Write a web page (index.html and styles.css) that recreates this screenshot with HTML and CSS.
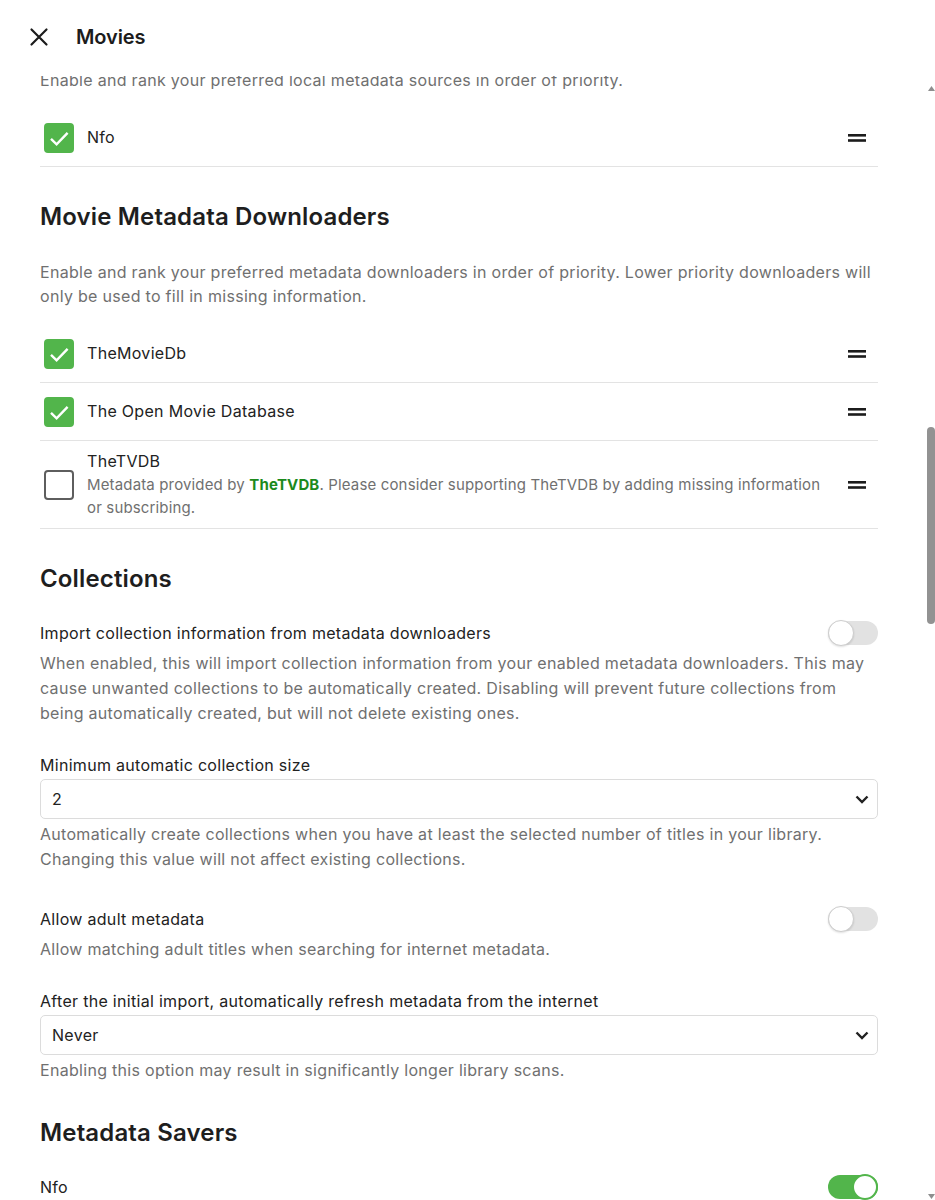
FILE: index.html
```html
<!DOCTYPE html>
<html lang="en">
<head>
<meta charset="utf-8">
<title>Movies – Library options</title>
<link rel="stylesheet" href="styles.css">
</head>
<body>
<div class="dialog">
  <header class="dialog-header">
    <button class="btn-close" type="button" aria-label="Close">
      <svg width="24" height="24" viewBox="0 0 24 24"><path d="M4.5 4.5 19.5 19.5M19.5 4.5 4.5 19.5" fill="none" stroke="#1c1c1c" stroke-width="2.2" stroke-linecap="round"/></svg>
    </button>
    <h1 class="dialog-title">Movies</h1>
  </header>

  <div class="dialog-main">
  <main class="dialog-body" id="scroller">
    <div class="content">

      <section class="group group-first">
        <div class="field">
          <label class="field-label" for="content-type">Content type</label>
          <div class="select-wrap">
            <select id="content-type" class="select" disabled><option>Movies</option></select>
            <svg class="chevron" width="14" height="9" viewBox="0 0 14 9"><path d="M1.5 1.5 7 7l5.5-5.5" fill="none" stroke="#222" stroke-width="2.4"/></svg>
          </div>
        </div>
        <div class="field">
          <label class="field-label" for="display-name">Display name</label>
          <input id="display-name" class="text-input" value="Movies">
        </div>
      </section>

      <section class="group">
        <h2 class="group-title">Folders</h2>
        <ul class="rank-list">
          <li class="rank-row"><span class="rank-text"><span class="rank-name">/media/movies</span></span></li>
          <li class="rank-row"><span class="rank-text"><span class="rank-name">/media/movies-4k</span></span></li>
        </ul>
      </section>

      <section class="group">
        <h2 class="group-title">Library Settings</h2>
        <div class="field">
          <label class="field-row"><span class="field-label">Enable the library</span><input type="checkbox" class="sr" checked><span class="switch"><span class="knob"></span></span></label>
          <p class="field-desc">Disabling the library will hide it from all users.</p>
        </div>
        <div class="field field-select">
          <label class="field-label" for="lang">Preferred download language</label>
          <div class="select-wrap">
            <select id="lang" class="select"><option>English</option></select>
            <svg class="chevron" width="14" height="9" viewBox="0 0 14 9"><path d="M1.5 1.5 7 7l5.5-5.5" fill="none" stroke="#222" stroke-width="2.4"/></svg>
          </div>
        </div>
        <div class="field field-select">
          <label class="field-label" for="country">Country/Region</label>
          <div class="select-wrap">
            <select id="country" class="select"><option>United States</option></select>
            <svg class="chevron" width="14" height="9" viewBox="0 0 14 9"><path d="M1.5 1.5 7 7l5.5-5.5" fill="none" stroke="#222" stroke-width="2.4"/></svg>
          </div>
        </div>
        <div class="field">
          <label class="field-row"><span class="field-label">Enable real time monitoring</span><input type="checkbox" class="sr" checked><span class="switch"><span class="knob"></span></span></label>
          <p class="field-desc">Changes to files will be processed immediately on supported file systems.</p>
        </div>
        <div class="field">
          <label class="field-row"><span class="field-label">Prefer embedded titles over filenames</span><input type="checkbox" class="sr"><span class="switch"><span class="knob"></span></span></label>
          <p class="field-desc">This determines the default display title when no internet metadata or local metadata is available.</p>
        </div>
        <div class="field">
          <label class="field-row"><span class="field-label">Prefer embedded extras titles over filenames</span><input type="checkbox" class="sr"><span class="switch"><span class="knob"></span></span></label>
          <p class="field-desc">Extras often have the same embedded name as the parent, check this to use embedded titles for them anyway.</p>
        </div>
        <div class="field field-select">
          <label class="field-label" for="embedded-subs">Allow embedded subtitles</label>
          <div class="select-wrap">
            <select id="embedded-subs" class="select"><option>Allow all</option></select>
            <svg class="chevron" width="14" height="9" viewBox="0 0 14 9"><path d="M1.5 1.5 7 7l5.5-5.5" fill="none" stroke="#222" stroke-width="2.4"/></svg>
          </div>
          <p class="field-desc">Disable subtitles that are packaged within media containers. Requires a full library refresh.</p>
        </div>
      </section>

      <section class="group">
        <h2 class="group-title">Trickplay</h2>
        <div class="field">
          <label class="field-row"><span class="field-label">Enable trickplay image extraction</span><input type="checkbox" class="sr"><span class="switch"><span class="knob"></span></span></label>
          <p class="field-desc">Trickplay images are similar to chapter images, except they span the entire length of the content and are used to show a preview when scrubbing through videos.</p>
        </div>
        <div class="field">
          <label class="field-row"><span class="field-label">Extract trickplay images during the library scan</span><input type="checkbox" class="sr"><span class="switch"><span class="knob"></span></span></label>
          <p class="field-desc">Generate trickplay images when videos are imported during the library scan. Otherwise, they will be extracted during the trickplay images scheduled task.</p>
        </div>
        <div class="field">
          <label class="field-row"><span class="field-label">Save trickplay images next to media</span><input type="checkbox" class="sr"><span class="switch"><span class="knob"></span></span></label>
          <p class="field-desc">Saving trickplay images into media folders will put them next to your media for easy migration and access.</p>
        </div>
      </section>

      <section class="group">
        <h2 class="group-title">Chapter Images</h2>
        <div class="field">
          <label class="field-row"><span class="field-label">Enable chapter image extraction</span><input type="checkbox" class="sr"><span class="switch"><span class="knob"></span></span></label>
          <p class="field-desc">Extracting chapter images will allow clients to display graphical scene selection menus. The process can be slow, resource intensive, and may require several gigabytes of space.</p>
        </div>
        <div class="field">
          <label class="field-row"><span class="field-label">Extract chapter images during the library scan</span><input type="checkbox" class="sr"><span class="switch"><span class="knob"></span></span></label>
          <p class="field-desc">Generate chapter images when videos are imported during the library scan. Otherwise, they will be extracted during the chapter images scheduled task.</p>
        </div>
      </section>

      <section class="group">
        <h2 class="group-title">Metadata Readers</h2>
        <p class="group-desc">Enable and rank your preferred local metadata sources in order of priority.</p>
        <ul class="rank-list">
          <li class="rank-row">
            <label class="rank-check"><input type="checkbox" class="sr" checked><span class="box"><svg width="30" height="30" viewBox="0 0 30 30"><path d="M7 15.8 12.6 21.4 23.6 9.8" fill="none" stroke="#fff" stroke-width="2.4"/></svg></span></label>
            <span class="rank-text"><span class="rank-name">Nfo</span></span>
            <svg class="handle" width="18" height="8" viewBox="0 0 18 8"><rect y="0" width="18" height="2.6"/><rect y="5.2" width="18" height="2.6"/></svg>
          </li>
        </ul>
      </section>

      <section class="group">
        <h2 class="group-title" id="downloaders-title">Movie Metadata Downloaders</h2>
        <p class="group-desc">Enable and rank your preferred metadata downloaders in order of priority. Lower priority downloaders will only be used to fill in missing information.</p>
        <ul class="rank-list">
          <li class="rank-row">
            <label class="rank-check"><input type="checkbox" class="sr" checked><span class="box"><svg width="30" height="30" viewBox="0 0 30 30"><path d="M7 15.8 12.6 21.4 23.6 9.8" fill="none" stroke="#fff" stroke-width="2.4"/></svg></span></label>
            <span class="rank-text"><span class="rank-name">TheMovieDb</span></span>
            <svg class="handle" width="18" height="8" viewBox="0 0 18 8"><rect y="0" width="18" height="2.6"/><rect y="5.2" width="18" height="2.6"/></svg>
          </li>
          <li class="rank-row">
            <label class="rank-check"><input type="checkbox" class="sr" checked><span class="box"><svg width="30" height="30" viewBox="0 0 30 30"><path d="M7 15.8 12.6 21.4 23.6 9.8" fill="none" stroke="#fff" stroke-width="2.4"/></svg></span></label>
            <span class="rank-text"><span class="rank-name">The Open Movie Database</span></span>
            <svg class="handle" width="18" height="8" viewBox="0 0 18 8"><rect y="0" width="18" height="2.6"/><rect y="5.2" width="18" height="2.6"/></svg>
          </li>
          <li class="rank-row">
            <label class="rank-check"><input type="checkbox" class="sr"><span class="box"><svg width="30" height="30" viewBox="0 0 30 30"><path d="M7 15.8 12.6 21.4 23.6 9.8" fill="none" stroke="#fff" stroke-width="2.4"/></svg></span></label>
            <span class="rank-text">
              <span class="rank-name">TheTVDB</span>
              <span class="rank-sub">Metadata provided by <a class="link" href="#">TheTVDB</a>. Please consider supporting TheTVDB by adding missing information or subscribing.</span>
            </span>
            <svg class="handle" width="18" height="8" viewBox="0 0 18 8"><rect y="0" width="18" height="2.6"/><rect y="5.2" width="18" height="2.6"/></svg>
          </li>
        </ul>
      </section>

      <section class="group">
        <h2 class="group-title">Collections</h2>
        <div class="field">
          <label class="field-row"><span class="field-label">Import collection information from metadata downloaders</span><input type="checkbox" class="sr"><span class="switch"><span class="knob"></span></span></label>
          <p class="field-desc">When enabled, this will import collection information from your enabled metadata downloaders. This may cause unwanted collections to be automatically created. Disabling will prevent future collections from being automatically created, but will not delete existing ones.</p>
        </div>
        <div class="field field-select">
          <label class="field-label" for="min-collection">Minimum automatic collection size</label>
          <div class="select-wrap">
            <select id="min-collection" class="select"><option>2</option><option>3</option><option>4</option></select>
            <svg class="chevron" width="14" height="9" viewBox="0 0 14 9"><path d="M1.5 1.5 7 7l5.5-5.5" fill="none" stroke="#222" stroke-width="2.4"/></svg>
          </div>
          <p class="field-desc">Automatically create collections when you have at least the selected number of titles in your library. Changing this value will not affect existing collections.</p>
        </div>
        <div class="field">
          <label class="field-row"><span class="field-label">Allow adult metadata</span><input type="checkbox" class="sr"><span class="switch"><span class="knob"></span></span></label>
          <p class="field-desc">Allow matching adult titles when searching for internet metadata.</p>
        </div>
        <div class="field field-select">
          <label class="field-label" for="refresh">After the initial import, automatically refresh metadata from the internet</label>
          <div class="select-wrap">
            <select id="refresh" class="select"><option>Never</option><option>Every 30 days</option><option>Every 60 days</option><option>Every 90 days</option></select>
            <svg class="chevron" width="14" height="9" viewBox="0 0 14 9"><path d="M1.5 1.5 7 7l5.5-5.5" fill="none" stroke="#222" stroke-width="2.4"/></svg>
          </div>
          <p class="field-desc">Enabling this option may result in significantly longer library scans.</p>
        </div>
      </section>

      <section class="group">
        <h2 class="group-title">Metadata Savers</h2>
        <div class="field">
          <label class="field-row"><span class="field-label">Nfo</span><input type="checkbox" class="sr" checked><span class="switch"><span class="knob"></span></span></label>
          <p class="field-desc">Pick the file formats to use when saving your metadata.</p>
        </div>
        <div class="field">
          <label class="field-row"><span class="field-label">Save artwork into media folders</span><input type="checkbox" class="sr" checked><span class="switch"><span class="knob"></span></span></label>
          <p class="field-desc">Saving artwork into media folders will put them in a place where they can be easily edited.</p>
        </div>
      </section>

      <section class="group">
        <h2 class="group-title">Movie Image Fetchers</h2>
        <p class="group-desc">Enable and rank your preferred image fetchers in order of priority.</p>
        <ul class="rank-list" id="fetchers"></ul>
      </section>

      <section class="group">
        <h2 class="group-title">Subtitle Downloads</h2>
        <p class="group-desc">Download languages</p>
        <ul class="rank-list" id="languages"></ul>
      </section>

    </div>
  </main>

  <div class="scroll-rail" aria-hidden="true">
    <div class="rail-btn rail-up"><svg width="7" height="5" viewBox="0 0 7 5"><path d="M3.5 0 7 5H0z"/></svg></div>
    <div class="rail-track" id="rail-track"><div class="rail-thumb" id="rail-thumb"></div></div>
    <div class="rail-btn rail-down"><svg width="7" height="5" viewBox="0 0 7 5"><path d="M0 0h7L3.5 5z"/></svg></div>
  </div>
  </div>
</div>
<script src="script.js"></script>
</body>
</html>
```

FILE: styles.css
```css
* { box-sizing: border-box; }

html, body {
  margin: 0;
  height: 100%;
}

body {
  font-family: Inter, "Noto Sans", "Liberation Sans", sans-serif;
  font-size: 16px;
  letter-spacing: 0.3px;
  color: #202020;
  background: #fff;
  overflow: hidden;
}

ul, p, h1, h2 { margin: 0; padding: 0; }
ul { list-style: none; }

.sr {
  position: absolute;
  width: 1px;
  height: 1px;
  opacity: 0;
  pointer-events: none;
}

/* dialog frame */
.dialog {
  display: flex;
  flex-direction: column;
  height: 1200px;
}

.dialog-header {
  flex: none;
  height: 76px;
  display: flex;
  align-items: center;
  gap: 17px;
  padding: 0 0 2px 19px;
}

.btn-close {
  width: 40px;
  height: 40px;
  border: 0;
  padding: 0;
  background: none;
  display: flex;
  align-items: center;
  justify-content: center;
}

.dialog-title {
  font-size: 20px;
  font-weight: 600;
  color: #1c1c1c;
  letter-spacing: -0.1px;
}

.dialog-main {
  flex: 1;
  min-height: 0;
  display: flex;
}

.dialog-body {
  flex: 1;
  min-width: 0;
  position: relative;
  overflow-y: scroll;
  scrollbar-width: none;
}
.dialog-body::-webkit-scrollbar { display: none; }

/* thin scroll indicator beside the body */
.scroll-rail {
  flex: none;
  width: 8px;
  display: flex;
  flex-direction: column;
}

.rail-btn {
  flex: none;
  display: flex;
  justify-content: center;
  fill: #8e8e8e;
}
.rail-up { height: 20px; align-items: flex-end; padding-bottom: 5px; }
.rail-down { height: 12px; align-items: flex-end; padding-bottom: 1px; }

.rail-track {
  flex: 1;
  min-height: 0;
}

.rail-thumb {
  width: 8px;
  border-radius: 4px;
  background: #929292;
}

.content {
  padding: 0 49px 40px 40px;
}

/* sections */
.group { padding-top: 35px; }
.group-first { padding-top: 10px; }

.group-title {
  font-size: 24px;
  line-height: 30px;
  font-weight: 600;
  color: #1e1e1e;
  letter-spacing: 0.15px;
}

.group-desc {
  margin-top: 28px;
  line-height: 24px;
  color: #707070;
}

/* ranked source lists */
.rank-list { margin-top: 17px; }

.rank-row {
  display: flex;
  align-items: center;
  min-height: 58px;
  padding: 9px 12px 9px 4px;
  border-bottom: 1px solid #e3e3e3;
}

.rank-check { display: flex; flex: none; margin-right: 13px; }

.box {
  width: 30px;
  height: 30px;
  border-radius: 4px;
  border: 2px solid #5e5e5e;
  display: flex;
  align-items: center;
  justify-content: center;
}
.box svg { display: none; }

.rank-check input:checked + .box {
  background: #52b54b;
  border-color: #52b54b;
}
.rank-check input:checked + .box svg { display: block; flex: none; }

.rank-text {
  flex: 1;
  display: flex;
  flex-direction: column;
  min-width: 0;
}

.rank-name {
  line-height: 23px;
  color: #222;
}

.rank-sub {
  font-size: 15px;
  line-height: 23px;
  letter-spacing: 0.15px;
  color: #707070;
  padding-right: 8px;
}

.link {
  color: #1c8a1c;
  font-weight: 700;
  text-decoration: none;
}

.handle {
  flex: none;
  fill: #1c1c1c;
  margin-left: 12px;
  margin-top: 1px;
}

/* form fields */
.field { margin-top: 26px; }
.field + .field { margin-top: 28px; }
.field + .field-select { margin-top: 27px; }
.field-select + .field { margin-top: 34px; }

.field-label {
  display: block;
  line-height: 24px;
  color: #222;
}

.field-row {
  display: flex;
  align-items: center;
  justify-content: space-between;
  min-height: 26px;
  gap: 24px;
}

.field-desc {
  margin-top: 4px;
  line-height: 25px;
  color: #707070;
}
.field-row + .field-desc { margin-top: 5px; }

.select-wrap {
  position: relative;
  margin-top: 2px;
}
.select-wrap + .field-desc { margin-top: 3px; }

.select, .text-input {
  display: block;
  width: 100%;
  height: 40px;
  border: 1px solid #dcdcdc;
  border-radius: 5px;
  background: #fff;
  padding: 0 40px 0 11px;
  font: inherit;
  letter-spacing: inherit;
  color: #222;
  appearance: none;
  -webkit-appearance: none;
}

.text-input { margin-top: 2px; }

.chevron {
  position: absolute;
  right: 9px;
  top: 16px;
  pointer-events: none;
}

/* toggle switch */
.switch {
  flex: none;
  width: 50px;
  height: 24px;
  border-radius: 12px;
  background: #e2e2e2;
  display: flex;
  align-items: center;
  justify-content: flex-start;
}

.knob {
  flex: none;
  width: 26px;
  height: 26px;
  border-radius: 50%;
  background: #fff;
  border: 1px solid #cdcdcd;
  box-shadow: 0 1px 2px rgba(0, 0, 0, 0.12);
}

input:checked + .switch {
  background: #52b54b;
  justify-content: flex-end;
}
input:checked + .switch .knob {
  border: 2px solid #52b54b;
  box-shadow: none;
}
```

FILE: script.js
```js
// Image fetchers and subtitle languages are rendered from plain data.
const fetchers = [
  ["TheMovieDb", true],
  ["The Open Movie Database", true],
  ["Embedded Image Extractor", true],
  ["Screen Grabber", true],
  ["Fanart", false]
];

const languages = [
  "Afrikaans", "Albanian", "Arabic", "Armenian", "Basque", "Belarusian", "Bengali", "Bosnian",
  "Bulgarian", "Catalan", "Chinese", "Croatian", "Czech", "Danish", "Dutch", "English",
  "Esperanto", "Estonian", "Finnish", "French", "Galician", "Georgian", "German", "Greek",
  "Hebrew", "Hindi", "Hungarian", "Icelandic", "Indonesian", "Italian", "Japanese", "Kazakh",
  "Korean", "Latvian", "Lithuanian", "Macedonian", "Malay", "Norwegian", "Persian", "Polish",
  "Portuguese", "Romanian", "Russian"
];

const checkSvg = '<svg width="30" height="30" viewBox="0 0 30 30"><path d="M7 15.8 12.6 21.4 23.6 9.8" fill="none" stroke="#fff" stroke-width="2.4"/></svg>';
const handleSvg = '<svg class="handle" width="18" height="8" viewBox="0 0 18 8"><rect y="0" width="18" height="2.6"/><rect y="5.2" width="18" height="2.6"/></svg>';

function row(name, checked, withHandle) {
  const li = document.createElement("li");
  li.className = "rank-row";
  li.innerHTML =
    '<label class="rank-check"><input type="checkbox" class="sr"' + (checked ? " checked" : "") +
    '><span class="box">' + checkSvg + '</span></label>' +
    '<span class="rank-text"><span class="rank-name"></span></span>' +
    (withHandle ? handleSvg : "");
  li.querySelector(".rank-name").textContent = name;
  return li;
}

const fetcherList = document.getElementById("fetchers");
fetchers.forEach(([name, on]) => fetcherList.appendChild(row(name, on, true)));

const langList = document.getElementById("languages");
languages.forEach((name) => langList.appendChild(row(name, false, false)));

// Open the dialog at the metadata downloaders section.
const scroller = document.getElementById("scroller");
const anchor = document.getElementById("downloaders-title");
scroller.scrollTop = anchor.offsetTop - 126;

// Keep the thin scroll indicator in step with the body.
const track = document.getElementById("rail-track");
const thumb = document.getElementById("rail-thumb");

function syncThumb() {
  const trackH = track.clientHeight;
  const total = scroller.scrollHeight;
  const view = scroller.clientHeight;
  const h = Math.max(24, Math.round(trackH * view / total));
  const max = total - view;
  const top = max > 0 ? Math.round((trackH - h) * scroller.scrollTop / max) : 0;
  thumb.style.height = h + "px";
  thumb.style.marginTop = top + "px";
}

syncThumb();
scroller.addEventListener("scroll", syncThumb);
```
